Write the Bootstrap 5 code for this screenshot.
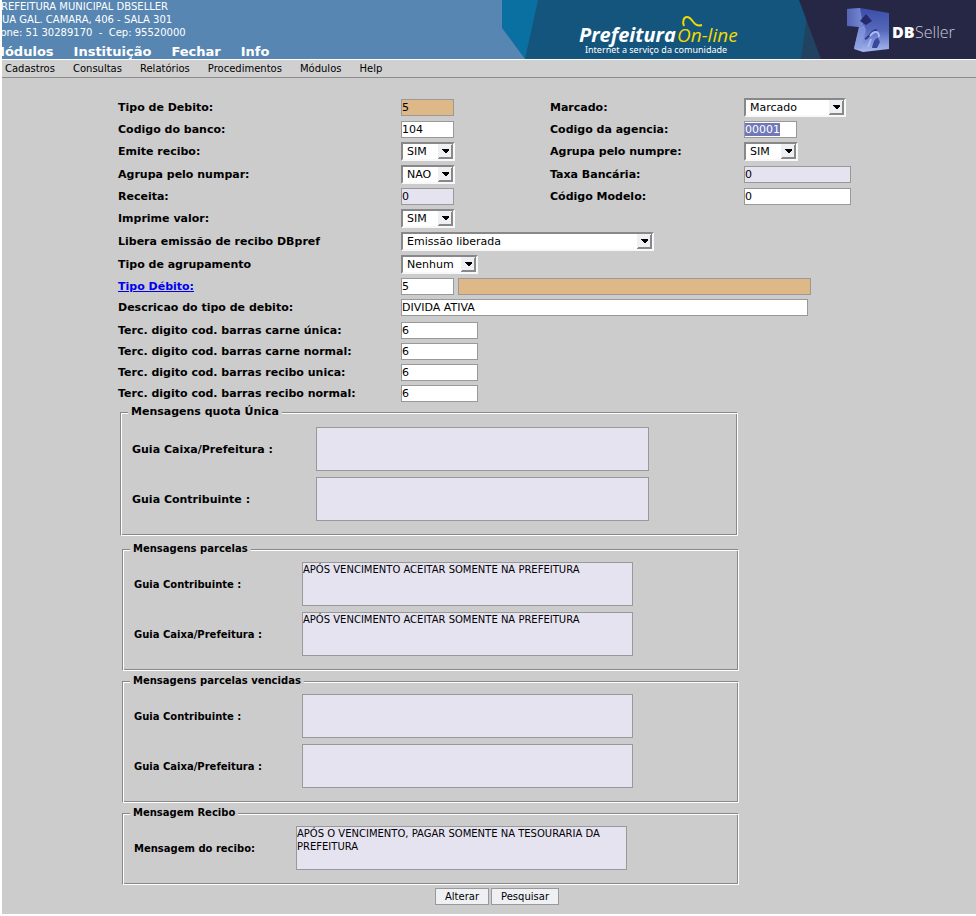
<!DOCTYPE html>
<html lang="pt-BR">
<head>
<meta charset="utf-8">
<meta name="viewport" content="width=device-width, initial-scale=1">
<title>Prefeitura On-line</title>
<link href="https://cdn.jsdelivr.net/npm/bootstrap@5.3.0/dist/css/bootstrap.min.css" rel="stylesheet">
<style>
body{font-family:"DejaVu Sans",sans-serif;font-size:11px;line-height:13px;color:#000;background:#fff}
.app-shell{background:#ccc;margin:0 0 2px 2px;padding-bottom:9px}
.app-top{background:#5786b2;height:59px;overflow:hidden}
.org-lines{font-size:10px;line-height:13px;margin-left:-7px;color:#fff}
.main-nav{gap:20px;font-size:13px;font-weight:700;line-height:15px;margin:5px 0 0 -10px}
.main-nav a,.sub-nav a{color:inherit;text-decoration:none}
.sub-nav{background:#d0d0d0;border-top:1px solid #fff;border-bottom:1px solid #8c8c8c;height:19px;gap:18px;font-size:10px;padding-left:3px}
.brand-art{width:474px;height:59px}
.form-area{padding:20px 100px 0 116px}
.form-grid{display:grid;grid-template-columns:283px 149px 194px minmax(107px,1fr);row-gap:4px;align-items:center}
.digit-grid{margin-top:6px}
.form-grid label,.form-grid .lookup{font-weight:700;line-height:15px;white-space:nowrap}
.lookup{color:#00e;justify-self:start}
.span-3{grid-column:2/5}
.field{border:1px solid #999;background:#fff;height:17px;padding:0;border-radius:0;font-size:11px;line-height:15px;color:#000;outline:0}
.field::selection{background:#7078b8;color:#fff}
.off{background:#e6e3f1}
.key{background:#deb887}
.pick{appearance:none;height:19px;border:2px solid;border-color:#888 #f8f8f8 #f8f8f8 #888;border-radius:0;padding:0 0 0 4px;font-size:11px;line-height:15px;color:#000;outline:0;background:#fff url("data:image/svg+xml,%3Csvg xmlns='http://www.w3.org/2000/svg' width='15' height='15' shape-rendering='crispEdges'%3E%3Cpath fill='%23888' d='M0 0h15v15H0z'/%3E%3Cpath fill='%23eef0f4' d='M0 0h14l-1 1v12H1l-1 1z'/%3E%3Cpath d='M4 5h7v1l-3 3H7L4 6z'/%3E%3C/svg%3E") right 0 top 0 no-repeat}
.w-s{width:53px}.w-p{width:54px}.w-m{width:77px}.w-l{width:107px}.w-o{width:102px}.w-e{width:253px}.w-d{width:407px}.w-t{width:353px}
.msg-box{border:1px solid;border-color:#888 #fff #fff #888;box-shadow:inset 1px 1px #fff,inset -1px -1px #888;width:617px;max-width:100%;margin:0 0 3px 4px;padding:6px 11px 14px;font-size:10px;font-weight:700}
.msg-box legend{float:none;width:auto;background:#ccc;margin:0 0 0 -4px;padding:0 3px;font-size:inherit;font-weight:700;line-height:14px}
.msg-box textarea{display:block;border:1px solid #999;background:#e6e3f1;width:331px;height:44px;padding:0;font-size:10px;line-height:13px;resize:none;outline:0;border-radius:0}
.msg-row{display:grid;grid-template-columns:168px 1fr;align-items:center}
.msg-row+.msg-row{margin-top:6px}
.first-box{font-size:11px;width:618px;margin:3px 0 6px 2px;padding-bottom:14px;padding-top:8px}
.first-box textarea{width:333px}
.first-box .msg-row{grid-template-columns:184px 1fr}
.msg-box .short-row{grid-template-columns:162px 1fr}
.act-row{gap:2px}
.act{border:1px solid #999;background:#eef0f4;height:17px;font-size:10px;line-height:16px;padding:0 9px;border-radius:0;color:#000}
</style>
<script src="https://cdn.jsdelivr.net/npm/bootstrap@5.3.0/dist/js/bootstrap.bundle.min.js"></script>
</head>
<body>
<div class="app-shell">
<header class="app-top d-flex justify-content-between">
  <div class="text-nowrap">
    <div class="org-lines">PREFEITURA MUNICIPAL DBSELLER<br>RUA GAL. CAMARA, 406 - SALA 301<br>Fone: 51 30289170 &nbsp;- &nbsp;Cep: 95520000</div>
    <nav class="main-nav d-flex text-white" aria-label="Principal"><a href="#">Módulos</a><a href="#">Instituição</a><a href="#">Fechar</a><a href="#">Info</a></nav>
  </div>
  <svg class="brand-art flex-shrink-0" viewBox="0 0 474 59" role="img" aria-label="Prefeitura On-line, DBSeller">
    <defs>
      <linearGradient id="cube" x1="0" y1="0" x2="0" y2="1"><stop offset="0" stop-color="#3c4da8"/><stop offset=".5" stop-color="#5468bb"/><stop offset="1" stop-color="#a9b9f0"/></linearGradient>
      <linearGradient id="side" x1="0" y1="0" x2="1" y2="0"><stop offset="0" stop-color="#5565b4"/><stop offset="1" stop-color="#7789d4"/></linearGradient>
    </defs>
    <path fill="#0a6fa1" d="M0 0h37v59H23L0 28z"/>
    <path fill="#14557e" d="M36 0h264v59H23z"/>
    <path fill="#214260" d="M298 0h32v59h-31z"/>
    <path fill="#14557e" d="M296 0h11l-8 59h-4z"/>
    <path fill="#262645" d="M297 0h177v59H319z"/>
    <text x="77" y="42" fill="#fff" font-family="Open Sans" font-size="20" font-weight="700" font-style="italic">Prefeitura</text>
    <text x="175" y="42" fill="#f3da00" font-family="Open Sans" font-size="19" font-style="italic">On-line</text>
    <path fill="none" stroke="#f3da00" stroke-width="2" d="M182 26c-2-5 0-9 3-9 6 0 6 11 15 8"/>
    <text x="83" y="53" fill="#fff" font-family="Noto Sans" font-size="9">Internet a serviço da comunidade</text>
    <path fill="url(#cube)" d="M345 9l13-1 29 5v36l-26 3-9-3 5-22-12-1z"/>
    <path fill="url(#side)" d="M345 9l13-1 3 17-4 2-12-2z"/>
    <path fill="#8d9ee2" opacity=".7" d="M357 27l5-2 2 5-5 19-7-1z"/>
    <path fill="#252a6c" d="M358 21l6-7 6 7-6 4z"/>
    <path fill="#3a489c" d="M370 48c1-6 3-10 6-10l2 4-3 6z"/>
    <path fill="none" stroke="#2f3a8c" stroke-width="2" d="M363 39c4-1 6-9 12-9"/>
    <path fill="none" stroke="#a9b9f3" stroke-width="2" d="M368 36c4-6 9-5 9 1M366 47l3-8"/>
    <text x="390" y="38" fill="#fff" font-family="Open Sans" font-size="16" font-weight="800">DB</text>
    <text x="413" y="38" fill="#c9c9da" font-family="Open Sans" font-size="16" font-weight="300">Seller</text>
  </svg>
</header>
<nav class="sub-nav d-flex align-items-center" aria-label="Menu"><a href="#">Cadastros</a><a href="#">Consultas</a><a href="#">Relatórios</a><a href="#">Procedimentos</a><a href="#">Módulos</a><a href="#">Help</a></nav>
<form class="form-area">
  <div class="form-grid">
    <label for="f1">Tipo de Debito:</label><input id="f1" class="field key w-s" value="5" readonly>
    <label for="f2">Marcado:</label><select id="f2" class="pick w-o"><option>Marcado</option></select>
    <label for="f3">Codigo do banco:</label><input id="f3" class="field w-s" value="104">
    <label for="f4">Codigo da agencia:</label><input id="f4" class="field w-s" value="00001">
    <label for="f5">Emite recibo:</label><select id="f5" class="pick w-p"><option>SIM</option></select>
    <label for="f6">Agrupa pelo numpre:</label><select id="f6" class="pick w-p"><option>SIM</option></select>
    <label for="f7">Agrupa pelo numpar:</label><select id="f7" class="pick w-p"><option>NAO</option></select>
    <label for="f8">Taxa Bancária:</label><input id="f8" class="field off w-l" value="0">
    <label for="f9">Receita:</label><input id="f9" class="field off w-s" value="0">
    <label for="f10">Código Modelo:</label><input id="f10" class="field w-l" value="0">
    <label for="f11">Imprime valor:</label><select id="f11" class="pick w-p span-3"><option>SIM</option></select>
    <label for="f12">Libera emissão de recibo DBpref</label><select id="f12" class="pick w-e span-3"><option>Emissão liberada</option></select>
    <label for="f13">Tipo de agrupamento</label><select id="f13" class="pick w-m span-3"><option>Nenhum</option></select>
    <a class="lookup" href="#">Tipo Débito:</a><div class="span-3 d-flex gap-1"><input aria-label="Tipo Débito" class="field w-s" value="5"><input aria-label="Descrição" class="field key w-t" readonly></div>
    <label for="f15">Descricao do tipo de debito:</label><input id="f15" class="field w-d span-3" value="DIVIDA ATIVA">
  </div>
  <div class="form-grid digit-grid">
    <label for="f16">Terc. digito cod. barras carne única:</label><input id="f16" class="field w-m span-3" value="6">
    <label for="f17">Terc. digito cod. barras carne normal:</label><input id="f17" class="field w-m span-3" value="6">
    <label for="f18">Terc. digito cod. barras recibo unica:</label><input id="f18" class="field w-m span-3" value="6">
    <label for="f19">Terc. digito cod. barras recibo normal:</label><input id="f19" class="field w-m span-3" value="6">
  </div>
  <fieldset class="msg-box first-box"><legend>Mensagens quota Única</legend>
    <div class="msg-row"><label for="m1">Guia Caixa/Prefeitura :</label><textarea id="m1"></textarea></div>
    <div class="msg-row"><label for="m2">Guia Contribuinte :</label><textarea id="m2"></textarea></div>
  </fieldset>
  <fieldset class="msg-box"><legend>Mensagens parcelas</legend>
    <div class="msg-row"><label for="m3">Guia Contribuinte :</label><textarea id="m3">APÓS VENCIMENTO ACEITAR SOMENTE NA PREFEITURA</textarea></div>
    <div class="msg-row"><label for="m4">Guia Caixa/Prefeitura :</label><textarea id="m4">APÓS VENCIMENTO ACEITAR SOMENTE NA PREFEITURA</textarea></div>
  </fieldset>
  <fieldset class="msg-box"><legend>Mensagens parcelas vencidas</legend>
    <div class="msg-row"><label for="m5">Guia Contribuinte :</label><textarea id="m5"></textarea></div>
    <div class="msg-row"><label for="m6">Guia Caixa/Prefeitura :</label><textarea id="m6"></textarea></div>
  </fieldset>
  <fieldset class="msg-box"><legend>Mensagem Recibo</legend>
    <div class="msg-row short-row"><label for="m7">Mensagem do recibo:</label><textarea id="m7">APÓS O VENCIMENTO, PAGAR SOMENTE NA TESOURARIA DA PREFEITURA</textarea></div>
  </fieldset>
  <div class="act-row d-flex justify-content-center"><button type="button" class="act">Alterar</button><button type="button" class="act">Pesquisar</button></div>
</form>
</div>
<script>
const agency=document.getElementById('f4');agency.focus({preventScroll:true});agency.select();
</script>
</body>
</html>
